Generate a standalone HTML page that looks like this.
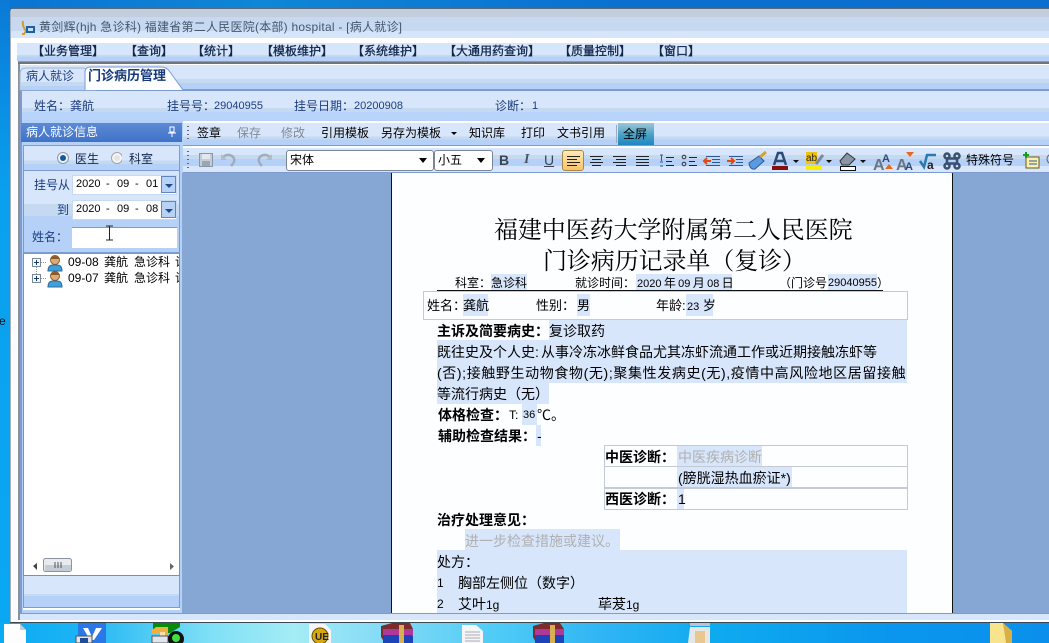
<!DOCTYPE html>
<html lang="zh"><head><meta charset="utf-8"><title>病人就诊</title>
<style>
html,body{margin:0;padding:0}
body{width:1049px;height:643px;overflow:hidden;position:relative;background:#0a70d0;font:12px/14px "Liberation Sans","WenQuanYi Zen Hei","Noto Sans CJK SC",sans-serif;color:#000}
div,span,svg{position:absolute;display:block}
.t{white-space:nowrap}
.n{color:#1b3d80}
.g{color:#7f8a99}
.d{font-size:14px;line-height:21px;height:21px}
.b{font-weight:bold}
.h{background:#d8e6fb}
.s{font-family:"Liberation Sans","Noto Serif CJK SC",serif}
.date{background:#fff;border:1px solid #c5d9f1;box-sizing:border-box}
.drop{background:#b8d2f5;border:1px solid #5f86bf;box-sizing:border-box;width:15px;height:17px}
.drop:after{content:"";position:absolute;left:3px;top:7px;border:4px solid transparent;border-top:4px solid #1e4a90;border-bottom:0}
.sel{background:#fff;border:1px solid #7a8596;border-radius:3px;box-sizing:border-box;height:21px;top:150px}
.ar{width:0;height:0;border:4px solid transparent;border-top:5px solid #000;border-bottom:0}
.m{color:#10264c;-webkit-text-stroke:.3px #10264c;top:44px}
.f{font-size:11px}
em{font-style:normal;font-size:11px}
</style></head><body>
<!-- desktop -->
<div style="left:0;top:0;width:1049px;height:8px;background:linear-gradient(90deg,#0a74d2,#0f86d6 25%,#0a70d0 60%,#0a6fd0)"></div>
<div style="left:0;top:0;width:10px;height:643px;background:linear-gradient(#0a7ad6,#0aa0ee 30%,#0aa8f2)"></div>
<div class="t" style="left:-1px;top:314px;font-size:12px;color:#111">e</div>
<div style="left:0;top:623px;width:1049px;height:20px;background:linear-gradient(90deg,#0aaaf4 0,#1eb4f4 8%,#7fe0f6 20%,#a4ecf6 28%,#7ed8f6 38%,#50ccf6 47%,#2eb4f4 58%,#0eaaf0 68%,#0a96ee 85%,#0a90ec 100%)"></div>
<!-- desktop icons -->
<svg style="left:0;top:623px" width="1049" height="20">
<path d="M4 1H20L26 7V20H4Z" fill="#fdfdfd"/><path d="M20 1V7H26" fill="#ccc"/>
<rect x="78" y="0" width="28" height="20" fill="#2a78e8"/><path d="M83 5H88L92 14L96 5H102L94 17H90Z" fill="#fff"/>
<rect x="76" y="13" width="16" height="7" fill="#dfe6ee" stroke="#555"/><rect x="80" y="15" width="8" height="5" fill="#1d4e96"/>
<path d="M153 0H180V4L170 10H168V20H160V9H153Z" fill="#0a8a0a"/><path d="M156 4H168V20H160V11H152V7Z" fill="#f0b040"/><rect x="160" y="9" width="5" height="11" fill="#fbe0b0"/>
<rect x="152" y="13" width="16" height="7" fill="#dfe6ee" stroke="#555"/><circle cx="176" cy="16" r="8" fill="#111"/><circle cx="176" cy="15" r="4" fill="#3ee03e"/>
<path d="M309 1H325L331 7V20H309Z" fill="#f6f6f6"/><circle cx="320" cy="13" r="8" fill="#d8a810" stroke="#6a5200"/><text x="315" y="17" font-size="10" font-weight="bold" font-family="Liberation Sans" fill="#222">UE</text>
<path d="M381 3L392 0H410L413 6L412 20H385L381 14Z" fill="#7b2c2c"/><rect x="383" y="6" width="30" height="6" fill="#b0389a"/><rect x="383" y="13" width="30" height="7" fill="#1c44b8"/><rect x="399" y="2" width="5" height="18" fill="#d8b050"/>
<path d="M533 3L544 0H560L564 6V20H536L533 14Z" fill="#7b2c2c"/><rect x="535" y="6" width="29" height="6" fill="#b0389a"/><rect x="535" y="13" width="29" height="7" fill="#1c44b8"/><rect x="550" y="2" width="5" height="18" fill="#d8b050"/>
<path d="M462 2H476L483 8V20H462Z" fill="#f5f5f5"/><path d="M465 9H480M465 12H480M465 15H480M465 18H480" stroke="#aab" stroke-width="1"/>
<path d="M690 4H710V20H688Z" fill="#e6e6e6"/><rect x="695" y="8" width="10" height="12" fill="#e8c890"/><rect x="690" y="0" width="20" height="3" fill="#c0c0d0"/>
<path d="M990 0H1003L1012 8V20H990Z" fill="#f8e48c"/><path d="M1003 0L1012 8V20H1006Z" fill="#d8b048"/>
</svg>

<!-- window -->
<div style="left:10px;top:8px;width:1039px;height:615px;background:#fdfeff;border-top:1px solid #5f6a78;border-left:1px solid #a8aeb8;box-sizing:border-box;border-radius:4px 0 0 0"></div>
<div style="left:11px;top:9px;width:1038px;height:8px;background:#c3cedd"></div>
<div style="left:11px;top:17px;width:1038px;height:14px;background:#c6d9f1"></div>
<div style="left:11px;top:31px;width:1038px;height:7px;background:#d6e5fa"></div>
<div style="left:11px;top:38px;width:1038px;height:5px;background:#fff"></div>
<div style="left:17px;top:43px;width:1032px;height:18px;background:linear-gradient(#d8e6fb 0,#d8e6fb 66%,#c6d9f1 66%,#c6d9f1 76%,#b5d1f8 76%)"></div>
<div style="left:18px;top:61px;width:1031px;height:1px;background:#7d9bd0"></div>
<div style="left:18px;top:62px;width:1031px;height:2px;background:#70747c"></div>
<div style="left:18px;top:64px;width:1031px;height:1px;background:#fff"></div>
<div style="left:18px;top:64px;width:2px;height:559px;background:#8a9097"></div>
<div style="left:11px;top:43px;width:6px;height:580px;background:#fbfcff"></div>
<div style="left:20px;top:65px;width:1029px;height:24px;background:linear-gradient(#d8e6fb 0,#d8e6fb 58%,#c5d9f1 58%,#c5d9f1 75%,#b5d1f8 75%)"></div>
<div style="left:20px;top:89px;width:1029px;height:2px;background:#7d9bd0"></div>
<div style="left:20px;top:91px;width:1029px;height:532px;background:#b5d1f8"></div>
<div style="left:20px;top:91px;width:1029px;height:29px;background:linear-gradient(#d8e6fb 0,#d8e6fb 58%,#c5d9f1 58%,#c5d9f1 72%,#b8d4fa 72%)"></div>
<div style="left:20px;top:91px;width:2px;height:522px;background:#7d9bd0"></div>
<div style="left:20px;top:613px;width:1029px;height:1px;background:#7d9bd0"></div>
<div style="left:20px;top:614px;width:1029px;height:6px;background:#d8e6fb"></div>
<div style="left:17px;top:620px;width:1032px;height:2px;background:#fff"></div>
<div style="left:10px;top:622px;width:1039px;height:1px;background:#3a4a55"></div>

<!-- title -->
<svg style="left:19px;top:19px" width="17" height="16"><path d="M4 2C3 6 5 9 7 12L5 15H3" stroke="#d89a28" stroke-width="2" fill="none"/><rect x="7" y="7" width="9" height="7" fill="#1f5fa8"/><rect x="9" y="9" width="5" height="3" fill="#bfe0f0"/></svg>
<div class="t" style="left:39px;top:20px;color:#46566c;letter-spacing:.24px">黄剑辉(hjh 急诊科) 福建省第二人民医院(本部) hospital - [病人就诊]</div>

<!-- menu -->
<div class="t m" style="left:32px">【业务管理】</div>
<div class="t m" style="left:125px">【查询】</div>
<div class="t m" style="left:192px">【统计】</div>
<div class="t m" style="left:261px">【模板维护】</div>
<div class="t m" style="left:352px">【系统维护】</div>
<div class="t m" style="left:444px">【大通用药查询】</div>
<div class="t m" style="left:559px">【质量控制】</div>
<div class="t m" style="left:652px">【窗口】</div>

<!-- tabs -->
<svg style="left:19px;top:66px" width="170" height="26">
<path d="M1 24V8Q1 2 7 2H63Q68 2 70 6L76 14V24Z" fill="#d8e6fb" stroke="#9db5d8"/>
<rect x="2" y="16" width="66" height="4" fill="#c5d9f1"/><rect x="2" y="20" width="66" height="4" fill="#b5d1f8"/>
<path d="M66 24V6Q66 1 72 1H142Q148 1 151 6L164 24" fill="#fdfeff" stroke="#7d9bd0"/>
</svg>
<div class="t n" style="left:26px;top:69px">病人就诊</div>
<div class="t n" style="left:88px;top:69px;font-size:13px;font-weight:bold;color:#16397a">门诊病历管理</div>

<!-- info -->
<div class="t n" style="left:34px;top:99px">姓名：龚航</div>
<div class="t n" style="left:167px;top:99px">挂号号：</div>
<div class="t n f" style="left:214px;top:99px">29040955</div>
<div class="t n" style="left:294px;top:99px">挂号日期：</div>
<div class="t n f" style="left:354px;top:99px">20200908</div>
<div class="t n" style="left:495px;top:99px">诊断：</div>
<div class="t n f" style="left:532px;top:99px">1</div>

<!-- left panel -->
<div style="left:21px;top:123px;width:161px;height:19px;background:linear-gradient(#5d8ad4,#3f72c8)"></div>
<div class="t" style="left:26px;top:125px;color:#fff">病人就诊信息</div>
<svg style="left:167px;top:125px" width="10" height="14"><path d="M3 2H7V7H3ZM1 8H9M5 8V12" stroke="#fff" fill="none"/></svg>
<div style="left:23px;top:145px;width:157px;height:26px;border:1px solid #7d9bd0;box-sizing:border-box;background:linear-gradient(#d8e6fb 0,#d8e6fb 60%,#c5d9f1 60%,#c5d9f1 75%,#b5d1f8 75%)"></div>
<svg style="left:56px;top:151px" width="66" height="14">
<circle cx="7" cy="7" r="5.5" fill="#eef2f8" stroke="#8c99a8"/><circle cx="7" cy="7" r="3" fill="#14589c"/>
<circle cx="61" cy="7" r="5.5" fill="#f6f6f6" stroke="#a0a6ae"/><circle cx="61" cy="7" r="3" fill="#e4e4e4"/>
</svg>
<div class="t" style="left:75px;top:152px;color:#10264c">医生</div>
<div class="t" style="left:129px;top:152px;color:#10264c">科室</div>
<div style="left:23px;top:171px;width:157px;height:82px;background:linear-gradient(#d8e6fb 0,#d8e6fb 40%,#c5d9f1 40%,#c5d9f1 55%,#b5d1f8 55%);border-left:1px solid #7d9bd0;border-right:1px solid #7d9bd0;box-sizing:border-box"></div>
<div style="left:23px;top:252px;width:157px;height:1px;background:#7d9bd0"></div>
<div class="t n" style="left:34px;top:178px">挂号从</div>
<div class="date" style="left:72px;top:175px;width:105px;height:20px"></div>
<div class="t f" style="left:76px;top:177px">2020</div><div class="t f" style="left:106px;top:177px">-</div><div class="t f" style="left:117px;top:177px">09</div><div class="t f" style="left:135px;top:177px">-</div><div class="t f" style="left:146px;top:177px">01</div>
<div class="drop" style="left:161px;top:176px"></div>
<div class="t n" style="left:57px;top:203px">到</div>
<div class="date" style="left:72px;top:200px;width:105px;height:20px"></div>
<div class="t f" style="left:76px;top:202px">2020</div><div class="t f" style="left:106px;top:202px">-</div><div class="t f" style="left:117px;top:202px">09</div><div class="t f" style="left:135px;top:202px">-</div><div class="t f" style="left:146px;top:202px">08</div>
<div class="drop" style="left:161px;top:201px"></div>
<div class="t n" style="left:32px;top:230px">姓名：</div>
<div style="left:72px;top:227px;width:105px;height:21px;background:#fff;border-top:1px solid #7d9bd0;box-sizing:border-box"></div>
<svg style="left:105px;top:225px" width="9" height="17"><path d="M1 1H8M4.5 1V15M1 15H8" stroke="#222" fill="none"/></svg>
<div style="left:23px;top:253px;width:157px;height:323px;background:#fff;border:1px solid #7d8fb0;border-top:1px solid #7d9bd0;box-sizing:border-box"></div>
<svg style="left:30px;top:254px" width="40" height="34">
<g fill="none" stroke="#7a8794"><rect x="2.5" y="4.5" width="8" height="8" fill="#f6f8fb"/><rect x="2.5" y="20.5" width="8" height="8" fill="#f6f8fb"/></g>
<path d="M4 8.5H9M6.5 6V11M4 24.5H9M6.5 22V27" stroke="#16397a"/><path d="M11 8.5H17M11 24.5H17M6.5 13V20" stroke="#999" stroke-dasharray="1 1"/>
<circle cx="25" cy="6" r="4.5" fill="#e0a878" stroke="#8a5a28"/><path d="M20 5Q25 -1 30 5" fill="#8a5a28"/><path d="M18 17Q18 11 23 11H27Q32 11 32 17Z" fill="#3fa0d8" stroke="#2a6ca0"/>
<circle cx="25" cy="22" r="4.5" fill="#e0a878" stroke="#8a5a28"/><path d="M20 21Q25 15 30 21" fill="#8a5a28"/><path d="M18 33Q18 27 23 27H27Q32 27 32 33Z" fill="#3fa0d8" stroke="#2a6ca0"/>
</svg>
<div style="left:67px;top:255px;width:112px;height:30px;overflow:hidden">
<div class="t" style="left:1px;top:0">09-08</div><div class="t" style="left:37px;top:0">龚航</div><div class="t" style="left:67px;top:0">急诊科</div><div class="t" style="left:108px;top:0">诊</div>
<div class="t" style="left:1px;top:16px">09-07</div><div class="t" style="left:37px;top:16px">龚航</div><div class="t" style="left:67px;top:16px">急诊科</div><div class="t" style="left:108px;top:16px">诊</div>
</div>
<svg style="left:25px;top:557px" width="153" height="17">
<path d="M8 9L12 6V13Z" fill="#444"/><path d="M145 6L149 9.500L145 13Z" fill="#666"/>
<rect x="18.500" y="1.500" width="28" height="13" rx="2" fill="#e8ebf0" stroke="#8a94a2"/><rect x="20" y="8" width="26" height="6" fill="#c4ccd6"/><path d="M30 5V11M33 5V11M36 5V11" stroke="#555"/>
</svg>
<div style="left:23px;top:576px;width:157px;height:32px;background:linear-gradient(#d8e6fb 0,#d8e6fb 58%,#c5d9f1 58%,#c5d9f1 65%,#b5d1f8 65%);border:1px solid #7d9bd0;border-top:0;box-sizing:border-box"></div>
<div style="left:23px;top:608px;width:157px;height:2px;background:#fff"></div>

<!-- toolbars -->
<div style="left:183px;top:121px;width:866px;height:2px;background:#fdfeff"></div>
<div style="left:183px;top:123px;width:866px;height:22px;background:linear-gradient(#d8e6fb 0,#d8e6fb 62%,#c5d9f1 62%,#c5d9f1 76%,#b5d1f8 76%)"></div>
<div style="left:183px;top:145px;width:866px;height:1px;background:#7d9bd0"></div>
<div style="left:183px;top:146px;width:866px;height:2px;background:#fdfeff"></div>
<div style="left:183px;top:148px;width:866px;height:24px;background:linear-gradient(#d8e6fb 0,#d8e6fb 30%,#c5d9f1 30%,#c5d9f1 45%,#b5d1f8 45%,#b5d1f8 75%,#d8e6fb 75%)"></div>
<div style="left:183px;top:172px;width:866px;height:1px;background:#7d9bd0"></div>
<div style="left:187px;top:126px;width:2px;height:16px;background:repeating-linear-gradient(#667 0,#667 1px,transparent 1px,transparent 4px)"></div>
<div style="left:187px;top:151px;width:2px;height:18px;background:repeating-linear-gradient(#667 0,#667 1px,transparent 1px,transparent 4px)"></div>
<div class="t" style="left:197px;top:126px">签章</div>
<div class="t g" style="left:237px;top:126px">保存</div>
<div class="t g" style="left:281px;top:126px">修改</div>
<div class="t" style="left:321px;top:126px">引用模板</div>
<div class="t" style="left:381px;top:126px">另存为模板</div>
<div class="ar" style="left:451px;top:132px;border-width:3px;border-top-width:3px"></div>
<div class="t" style="left:469px;top:126px">知识库</div>
<div class="t" style="left:521px;top:126px">打印</div>
<div class="t" style="left:557px;top:126px">文书引用</div>
<div style="left:616px;top:125px;width:1px;height:18px;background:#9aaac0"></div>
<div style="left:618px;top:123px;width:36px;height:22px;background:linear-gradient(#9cc6d8,#48a0c4 55%,#1e86c4)"></div>
<div class="t" style="left:623px;top:127px">全屏</div>

<svg style="left:195px;top:150px" width="85" height="20" fill="none">
<rect x="4.500" y="3.500" width="13" height="13" fill="#c4ccd6" stroke="#8a96a6"/><rect x="7" y="4" width="8" height="5" fill="#e4e8ee"/><rect x="7" y="11" width="8" height="5" fill="#9aa6b4"/>
<path d="M27 8Q32 3 37 6Q42 10 36 16" stroke="#a2acba" stroke-width="2.500"/><path d="M26 4V10H32" fill="#b4bcc8"/>
<path d="M76 8Q71 3 66 6Q61 10 67 16" stroke="#a2acba" stroke-width="2.500"/><path d="M77 4V10H71" fill="#b4bcc8"/>
</svg>
<div class="sel" style="left:286px;width:148px"></div>
<div class="t" style="left:290px;top:153px">宋体</div>
<div class="ar" style="left:419px;top:158px"></div>
<div class="sel" style="left:434px;width:59px"></div>
<div class="t" style="left:438px;top:153px">小五</div>
<div class="ar" style="left:477px;top:158px"></div>
<div class="t" style="left:499px;top:153px;font-weight:bold;font-size:14px;color:#3a4656">B</div>
<div class="t" style="left:524px;top:153px;font-style:italic;font-weight:bold;font-size:14px;color:#4a5666;font-family:'Liberation Serif'">I</div>
<div class="t" style="left:544px;top:153px;font-size:14px;color:#3a4656;text-decoration:underline">U</div>
<div style="left:562px;top:150px;width:22px;height:21px;box-sizing:border-box;background:linear-gradient(#fde9b8,#f8c468);border:1px solid #a88848;border-radius:3px"></div>
<svg style="left:560px;top:150px" width="489" height="22" fill="none">
<g stroke="#222"><path d="M7 6.500H20M7 9.500H17M7 12.500H20M7 15.500H17"/><path d="M30 6.500H43M32 9.500H41M30 12.500H43M32 15.500H41"/><path d="M53 6.500H66M56 9.500H66M53 12.500H66M56 15.500H66"/><path d="M76 6.500H89M76 9.500H89M76 12.500H89M76 15.500H89"/></g>
<path d="M100 5H103M100 12H103M101.500 5V11M100 16H103" stroke="#2858a0"/><path d="M106 7.500H114M106 11.500H112M106 15.500H114" stroke="#222"/>
<circle cx="124" cy="7" r="1.800" stroke="#333"/><circle cx="124" cy="14" r="1.800" stroke="#333"/><path d="M129 7.500H137M129 11.500H135M129 15.500H137" stroke="#222"/>
<path d="M146 6.500H160M152 9.500H160M152 12.500H160M146 15.500H160" stroke="#2a5a9a"/><path d="M144 11H151M147 8L144 11L147 14" stroke="#e04a10" stroke-width="2"/>
<path d="M169 6.500H183M176 9.500H183M176 12.500H183M169 15.500H183" stroke="#2a5a9a"/><path d="M167 11H174M171 8L174 11L171 14" stroke="#e04a10" stroke-width="2"/>
<path d="M189 13L199 6L204 11L195 19Q190 20 189 13Z" fill="#5c9ae0" stroke="#2a5a9a"/><path d="M200 7L206 2" stroke="#d8a030" stroke-width="3"/>
<path d="M214 15L218 3H222L226 15M216 11H224" stroke="#2a4a78" stroke-width="2.500"/><rect x="212" y="16" width="16" height="4" fill="#861010"/><path d="M233 10H239L236 13Z" fill="#111"/>
<rect x="246" y="2" width="11" height="12" fill="#f4c010"/><text x="246" y="11" font-size="10" font-family="Liberation Sans" fill="#222">ab</text><path d="M256 14L263 5" stroke="#7a8a9a" stroke-width="3"/><rect x="246" y="16" width="16" height="4" fill="#f8f000"/><path d="M266 10H272L269 13Z" fill="#111"/>
<path d="M280 11L287 3L295 9L289 15H282Z" fill="#8a96a6" stroke="#333"/><rect x="280.500" y="16.500" width="15" height="4" fill="#fff" stroke="#111"/><path d="M300 10H306L303 13Z" fill="#111"/>
<text x="313" y="20" font-size="16" font-weight="bold" font-family="Liberation Sans" fill="#6a7684">A</text><text x="322" y="12" font-size="11" font-weight="bold" font-family="Liberation Sans" fill="#2a4a78">A</text><path d="M325 19L329 14L333 19Z" fill="#e86820"/>
<text x="336" y="20" font-size="16" font-weight="bold" font-family="Liberation Sans" fill="#6a7684">A</text><text x="345" y="20" font-size="11" font-weight="bold" font-family="Liberation Sans" fill="#2a4a78">A</text><path d="M346 2H354L350 7Z" fill="#e86820"/>
<path d="M360 11L364 17L367 5H376" stroke="#2a7ab0" stroke-width="2.500"/><text x="367" y="19" font-size="12" font-weight="bold" font-family="Liberation Sans" fill="#222">a</text>
<g stroke="#3a5070" stroke-width="2.500"><circle cx="387" cy="6" r="2.500"/><circle cx="397" cy="6" r="2.500"/><circle cx="387" cy="16" r="2.500"/><circle cx="397" cy="16" r="2.500"/><path d="M387 8.500H397V13.500H387Z"/></g>
<rect x="466" y="7" width="13" height="11" fill="#fbf0b0" stroke="#6a5a20"/><path d="M469 11H477M469 14H477" stroke="#2a5a9a"/><path d="M463 5H469M466 2V8" stroke="#10a020" stroke-width="2"/>
<circle cx="492" cy="9" r="5" stroke="#667"/>
</svg>
<div class="t" style="left:966px;top:153px">特殊符号</div>

<!-- editor -->
<div style="left:182px;top:173px;width:867px;height:440px;background:#86a7d4"></div>
<div style="left:391px;top:173px;width:562px;height:440px;background:#fdfeff;border-left:1px solid #111;border-right:1px solid #111;box-sizing:border-box"></div>

<div class="t s" style="left:494px;top:217px;font-size:24px;line-height:28px;letter-spacing:-.1px">福建中医药大学附属第二人民医院</div>
<div class="t s" style="left:543px;top:248px;font-size:24px;line-height:28px;letter-spacing:-.1px">门诊病历记录单（复诊）</div>

<div class="h" style="left:491px;top:274px;width:36px;height:16px"></div>
<div class="h" style="left:636px;top:274px;width:96px;height:16px"></div>
<div class="h" style="left:828px;top:274px;width:49px;height:16px"></div>
<div class="t" style="left:455px;top:276px">科室：</div>
<div class="t" style="left:491px;top:276px">急诊科</div>
<div class="t" style="left:575px;top:276px">就诊时间：</div>
<div class="t" style="left:637px;top:276px;word-spacing:-1px"><em>2020</em> 年 <em>09</em> 月 <em>08</em> 日</div>
<div class="t" style="left:779px;top:276px">（门诊号</div>
<div class="t f" style="left:828px;top:276px">29040955</div>
<div class="t" style="left:877px;top:276px">）</div>
<div style="left:437px;top:290px;width:446px;height:1px;background:#111"></div>

<div style="left:423px;top:291px;width:485px;height:29px;border:1px solid #c3cad6;box-sizing:border-box"></div>
<div class="h" style="left:463px;top:294px;width:25px;height:22px"></div>
<div class="h" style="left:577px;top:294px;width:13px;height:22px"></div>
<div class="h" style="left:686px;top:294px;width:27px;height:22px"></div>
<div class="t" style="left:427px;top:299px;font-size:13px">姓名：</div>
<div class="t" style="left:463px;top:299px;font-size:13px">龚航</div>
<div class="t" style="left:536px;top:299px;font-size:13px">性别：</div>
<div class="t" style="left:577px;top:299px;font-size:13px">男</div>
<div class="t" style="left:656px;top:299px;font-size:13px">年龄:</div>
<div class="t" style="left:687px;top:299px;font-size:13px"><em>23</em> 岁</div>

<div class="h" style="left:549px;top:320px;width:358px;height:20px"></div>
<div class="h" style="left:437px;top:340px;width:470px;height:43px"></div>
<div class="h" style="left:437px;top:383px;width:112px;height:21px"></div>
<div class="h" style="left:522px;top:404px;width:15px;height:21px"></div>
<div class="h" style="left:536px;top:425px;width:5px;height:21px"></div>
<div class="t d b" style="left:437px;top:321px">主诉及简要病史：</div>
<div class="t d" style="left:549px;top:321px">复诊取药</div>
<div class="t d" style="left:437px;top:342px">既往史及个人史:</div>
<div class="t d" style="left:541px;top:342px">从事冷冻冰鲜食品尤其冻虾流通工作或近期接触冻虾等</div>
<div class="t d" style="left:437px;top:363px;letter-spacing:.62px">(否);接触野生动物食物(无);聚集性发病史(无),疫情中高风险地区居留接触</div>
<div class="t d" style="left:437px;top:384px">等流行病史（无）</div>
<div class="t d b" style="left:438px;top:405px">体格检查：</div>
<div class="t d" style="left:509px;top:405px;font-size:12px">T:</div>
<div class="t d f" style="left:523px;top:405px">36</div>
<div class="t d" style="left:537px;top:405px">℃。</div>
<div class="t d b" style="left:438px;top:426px">辅助检查结果：</div>
<div class="t d" style="left:537px;top:426px">-</div>

<div style="left:604px;top:445px;width:304px;height:65px;border:1px solid #c3cad6;box-sizing:border-box"></div>
<div style="left:604px;top:466px;width:304px;height:1px;background:#c3cad6"></div>
<div style="left:604px;top:487px;width:304px;height:2px;background:#c3cad6"></div>
<div class="h" style="left:677px;top:446px;width:85px;height:20px"></div>
<div class="h" style="left:677px;top:467px;width:115px;height:20px"></div>
<div class="h" style="left:677px;top:489px;width:7px;height:20px"></div>
<div class="t d b" style="left:605px;top:447px">中医诊断：</div>
<div class="t d" style="left:678px;top:447px;color:#b0b0b0">中医疾病诊断</div>
<div class="t d" style="left:678px;top:468px">(膀胱湿热血瘀证*)</div>
<div class="t d b" style="left:605px;top:489px">西医诊断：</div>
<div class="t d" style="left:678px;top:489px">1</div>

<div class="t d b" style="left:437px;top:510px">治疗处理意见：</div>
<div class="h" style="left:465px;top:529px;width:155px;height:21px"></div>
<div class="t d" style="left:465px;top:531px;color:#b0b0b0">进一步检查措施或建议。</div>
<div class="h" style="left:437px;top:550px;width:470px;height:63px"></div>
<div class="t d" style="left:437px;top:552px">处方：</div>
<div class="t d" style="left:437px;top:573px;font-size:12px">1</div>
<div class="t d" style="left:458px;top:573px">胸部左侧位（数字）</div>
<div class="t d" style="left:437px;top:594px;font-size:12px">2</div>
<div class="t d" style="left:458px;top:594px">艾叶<em style="font-size:12px">1g</em></div>
<div class="t d" style="left:598px;top:594px">荜茇<em style="font-size:12px">1g</em></div>
</body></html>
